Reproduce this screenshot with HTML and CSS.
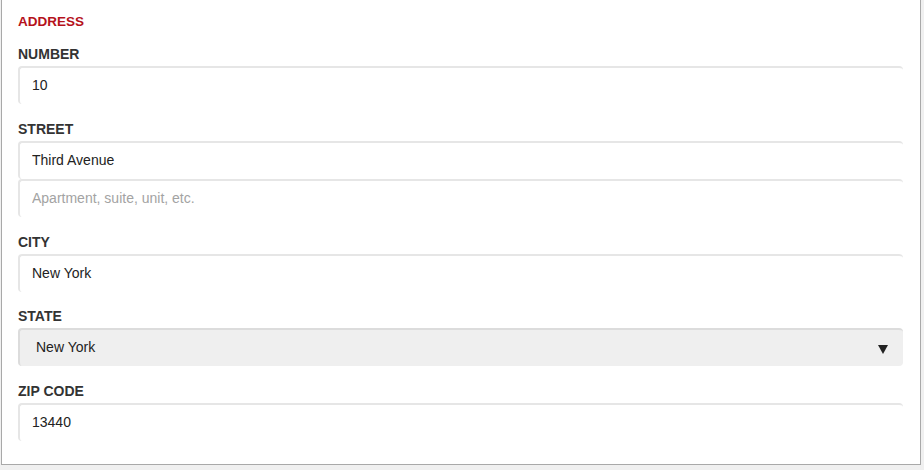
FILE: index.html
```html
<!DOCTYPE html>
<html lang="en">
<head>
    <meta charset="UTF-8">
    <meta name="viewport" content="width=device-width, initial-scale=1.0">
    <title>Address</title>
    <link rel="stylesheet" href="styles.css">
</head>
<body>
    <div class="panel">
        <div class="section-title">ADDRESS</div>

        <div class="field">
            <label for="number">Number</label>
            <input type="text" id="number" value="10">
        </div>

        <div class="field">
            <label for="street">Street</label>
            <input type="text" id="street" value="Third Avenue">
            <input type="text" id="street2" placeholder="Apartment, suite, unit, etc.">
        </div>

        <div class="field">
            <label for="city">City</label>
            <input type="text" id="city" value="New York">
        </div>

        <div class="field">
            <label>State</label>
            <div class="select">
                <span>New York</span>
                <svg class="arrow" width="10" height="9" viewBox="0 0 10 9">
                    <polygon points="0,0 10,0 5,9" fill="#222"/>
                </svg>
            </div>
        </div>

        <div class="field">
            <label for="zip">Zip Code</label>
            <input type="text" id="zip" value="13440">
        </div>
    </div>
</body>
</html>
```

FILE: styles.css
```css
body {
    margin: 0;
    padding: 0;
    background-color: #f0f0f0;
    font-family: "Liberation Sans", Arial, sans-serif;
    height: 470px;
    overflow: hidden;
}
.panel {
    width: 885px;
    margin-left: 1px;
    background: white;
    border: 1px solid #a9a9a9;
    border-top: none;
    padding: 14px 17px 6px 16px;
}
.section-title {
    color: #b5121b;
    font-size: 13.5px;
    font-weight: bold;
    line-height: 16px;
    margin-bottom: 16px;
}
.field {
    margin-bottom: 16.75px;
}
.field label {
    display: block;
    color: #333;
    font-size: 14px;
    font-weight: bold;
    text-transform: uppercase;
    line-height: 16px;
    margin-bottom: 4px;
}
.field input {
    display: block;
    box-sizing: border-box;
    width: 100%;
    height: 38px;
    margin: 0;
    padding: 0 12px 2px;
    border: none;
    border-top: 2px solid #e6e6e6;
    border-left: 2px solid #e6e6e6;
    border-radius: 4px;
    background: white;
    font-family: inherit;
    font-size: 14px;
    color: #222;
    outline: none;
}
.field input::placeholder {
    color: #a3a3a3;
}
.select {
    box-sizing: border-box;
    height: 38px;
    display: flex;
    align-items: center;
    justify-content: space-between;
    padding: 0 15px 2px 16px;
    background: #efefef;
    border-top: 2px solid #dcdcdc;
    border-left: 2px solid #dcdcdc;
    border-radius: 4px;
    font-size: 14px;
    color: #222;
}
.select .arrow {
    margin-top: 4px;
}
```
